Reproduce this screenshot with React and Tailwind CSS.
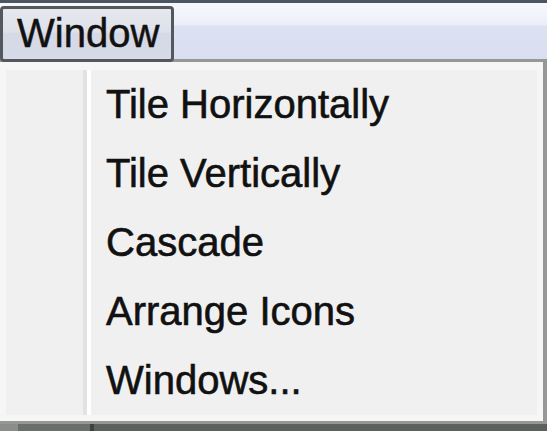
import React from "react";

const items = ["Tile Horizontally", "Tile Vertically", "Cascade", "Arrange Icons", "Windows..."];

export default function App() {
  return (
    <div className="w-[547px] h-[431px] overflow-hidden bg-[#5c615d] font-['Liberation_Sans',Arial,sans-serif] text-[#111]">
      <div className="h-[3px] bg-[#4c5566]" />

      {/* menu bar */}
      <div className="h-[56px] pt-[3px] flex items-start bg-[linear-gradient(to_bottom,#f6f8fc_0%,#eceff8_38%,#dde2f2_42%,#d9dff1_100%)]">
        <div className="relative z-10 w-[174px] h-[56px] -mb-[3px] rounded-[4px] border-[3px] border-[#53575e] bg-[linear-gradient(to_bottom,#e6e8ef_0%,#dfe1ea_45%,#d5d8e5_50%,#d7dae7_100%)] pl-[14px] text-[40px] leading-[48px] [-webkit-text-stroke:0.5px_#111]">
          Window
        </div>
      </div>

      {/* dropdown */}
      <div className="h-[365px] border-t-[3px] border-r-[4px] border-b-[3px] border-[#979797] bg-[#f6f6f6] pt-[8px] pr-[6px] pb-[6px] pl-[6px]">
        <div className="h-[345px] flex bg-[#f0f0f0]">
          <div className="w-[77px] shrink-0" />
          <div className="w-[4px] bg-[#e2e2e2]" />
          <div className="w-[4px] bg-white" />
          <div className="flex-1 pl-[15px]">
            {items.map((t) => (
              <div key={t} className="h-[69px] text-[40px] leading-[69px] whitespace-nowrap [-webkit-text-stroke:0.6px_#111]">
                {t}
              </div>
            ))}
          </div>
        </div>
      </div>

      <div className="h-[7px] flex">
        <div className="w-[18px] bg-[#8a8d8a]" />
        <div className="w-[72px] bg-[#6a6f6b]" />
        <div className="w-[4px] bg-[#3e423f]" />
        <div className="flex-1 bg-[#5c615d]" />
      </div>
    </div>
  );
}
